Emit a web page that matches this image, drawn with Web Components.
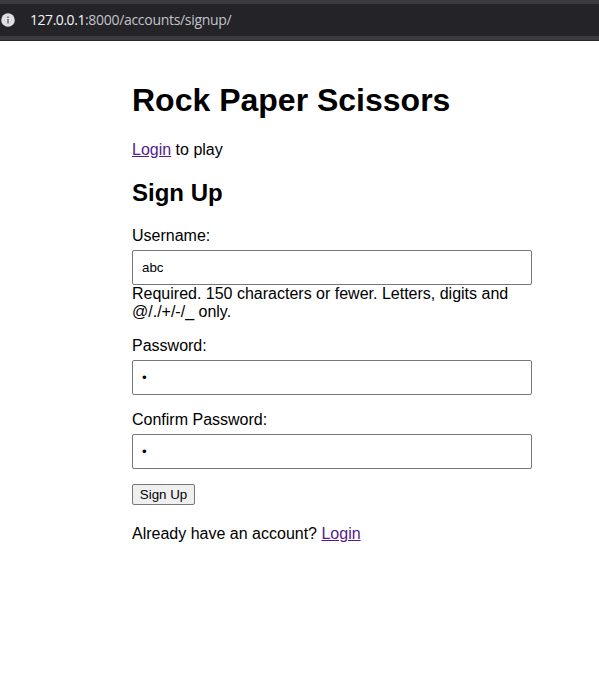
<!DOCTYPE html>
<html lang="en">
<head>
<meta charset="utf-8">
<title>Rock Paper Scissors</title>
<style>
html,body{margin:0;height:100%;background:#fff;overflow:hidden}
body{font:16px/18px "Liberation Sans",Arial,sans-serif;color:#000}
</style>
</head>
<body>
<signup-page></signup-page>
<script>
const define = (name, html) => customElements.define(name, class extends HTMLElement {
  constructor() {
    super();
    this.attachShadow({mode: "open"}).innerHTML = html;
  }
});

define("address-bar", `
<style>
:host{display:block;border-bottom:1px solid #29292d}
.bar{display:flex;align-items:center;box-sizing:border-box;height:40px;background:#232328;border-top:4px solid #3b3b40;border-bottom:4px solid #3b3b40;color:#c4c4c8;font:14px/18px "Open Sans","Noto Sans",sans-serif;letter-spacing:-.3px}
svg{width:14px;height:14px;margin:0 15px 0 1px;flex:none}
b{font-weight:400;color:#f4f4f6;letter-spacing:-.46px}
</style>
<div class="bar">
<svg viewBox="0 0 14 14"><circle cx="7" cy="7" r="6.8" fill="#dedee0"/><path d="M7 6v4.5M7 3.5v1.5" stroke="#66666a" stroke-width="1.5"/></svg>
<span><b>127.0.0.1</b><slot></slot></span>
</div>`);

define("page-link", `
<style>:host{display:inline}a{color:#551a8b;text-decoration:underline}</style>
<a href="#"><slot></slot></a>`);

customElements.define("form-field", class extends HTMLElement {
  connectedCallback() {
    const root = this.attachShadow({mode: "open"});
    root.innerHTML = `
<style>
:host{display:block;margin-bottom:16px}
label{display:block;margin-bottom:5px}
.box{display:flex;align-items:center;box-sizing:border-box;width:400px;height:35px;padding:0 9px;border:1px solid #767676;border-radius:2px;background:#fff;font-size:13.333px;line-height:15px}
</style>
<label></label><div class="box"></div><slot></slot>`;
    root.querySelector("label").textContent = this.getAttribute("label");
    root.querySelector(".box").textContent = this.getAttribute("value");
  }
});

define("submit-button", `
<style>
:host{display:block;height:21px;margin-top:-1px}
button{display:block;box-sizing:border-box;width:63px;height:21px;margin:0;padding:0;border:1px solid #767676;border-radius:2px;background:#efefef;color:#000;font:13.333px/15px "Liberation Sans",Arial,sans-serif}
</style>
<button type="button"><slot></slot></button>`);

define("signup-page", `
<style>
:host{display:block}
main{width:400px;margin:41px 0 0 132px}
h1{font-size:32px;line-height:36px;margin:0 0 23px}
h2{font-size:24px;line-height:27px;margin:0 0 21px}
p{margin:0}
.intro{margin-bottom:20px}
.foot{margin-top:20px}
</style>
<address-bar>:8000/accounts/signup/</address-bar>
<main>
<h1>Rock Paper Scissors</h1>
<p class="intro"><page-link>Login</page-link> to play</p>
<h2>Sign Up</h2>
<form-field label="Username:" value="abc">Required. 150 characters or fewer. Letters, digits and @/./+/-/_ only.</form-field>
<form-field label="Password:" value="•"></form-field>
<form-field label="Confirm Password:" value="•"></form-field>
<submit-button>Sign Up</submit-button>
<p class="foot">Already have an account? <page-link>Login</page-link></p>
</main>`);
</script>
</body>
</html>
